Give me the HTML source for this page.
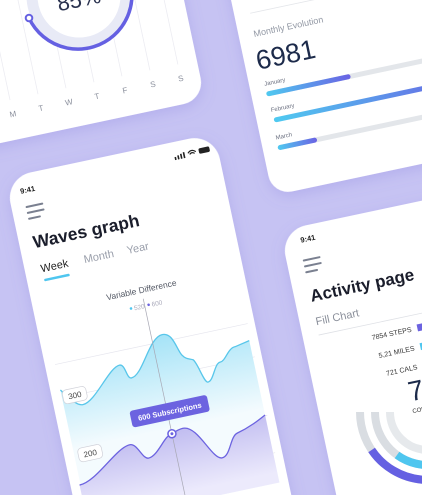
<!DOCTYPE html>
<html><head><meta charset="utf-8"><style>
html,body{margin:0;padding:0;width:422px;height:495px;overflow:hidden;background:#c6c3f3}
svg{display:block;font-family:"Liberation Sans",sans-serif}
</style></head><body>
<svg width="422" height="495" viewBox="0 0 422 495" xmlns="http://www.w3.org/2000/svg">
<defs>
<filter id="sh" x="-20%" y="-20%" width="140%" height="140%"><feDropShadow dx="0" dy="4" stdDeviation="7" flood-color="#7d74d8" flood-opacity="0.25"/></filter>
<linearGradient id="bar" x1="0" y1="0" x2="1" y2="0"><stop offset="0" stop-color="#4fcaf0"/><stop offset="1" stop-color="#6a62e4"/></linearGradient>
<linearGradient id="cy" gradientUnits="userSpaceOnUse" x1="0" y1="360" x2="0" y2="455"><stop offset="0" stop-color="#a4e3f7"/><stop offset="1" stop-color="#f4fbfe"/></linearGradient>
<linearGradient id="pu" gradientUnits="userSpaceOnUse" x1="0" y1="460" x2="0" y2="520"><stop offset="0" stop-color="#c3bff1"/><stop offset="1" stop-color="#eceafc"/></linearGradient>
</defs>
<rect width="422" height="495" fill="#c6c3f3"/>
<g transform="rotate(-12)">
  <!-- top-left card -->
  <rect x="-220" y="-220" width="400" height="360" rx="22" fill="#fff" filter="url(#sh)"/>
  <g stroke="#ececf2" stroke-width="0.8">
    <line x1="-11" y1="-150" x2="-11" y2="100"/><line x1="17.6" y1="-150" x2="17.6" y2="100"/>
    <line x1="46.2" y1="-150" x2="46.2" y2="100"/><line x1="74.8" y1="-150" x2="74.8" y2="100"/>
    <line x1="103.4" y1="-150" x2="103.4" y2="100"/><line x1="132" y1="-150" x2="132" y2="100"/>
    <line x1="160.6" y1="-150" x2="160.6" y2="100"/>
  </g>
  <g font-size="8" fill="#8a8f9c" text-anchor="middle">
    <text x="-11" y="117">M</text><text x="17.6" y="117">T</text><text x="46.2" y="117">W</text>
    <text x="74.8" y="117">T</text><text x="103.4" y="117">F</text><text x="132" y="117">S</text><text x="160.6" y="117">S</text>
  </g>
  <!-- top-right card -->
  <rect x="226" y="-120" width="320" height="368" rx="20" fill="#fff" filter="url(#sh)"/>
  <line x1="242" y1="65" x2="440" y2="65" stroke="#e4e6ea" stroke-width="0.8"/>
  <text x="241" y="89" font-size="9" fill="#9298a4">Monthly Evolution</text>
  <text x="238" y="122" font-size="27" fill="#1c2a4a">6981</text>
  <text x="241" y="139" font-size="6" fill="#6b7080">January</text>
  <rect x="241" y="145" width="200" height="5" rx="2.5" fill="#e3e6ea"/>
  <rect x="241" y="145" width="86" height="5" rx="2.5" fill="url(#bar)"/>
  <text x="242" y="166" font-size="6" fill="#6b7080">February</text>
  <rect x="243" y="172" width="200" height="5" rx="2.5" fill="url(#bar)"/>
  <text x="241" y="194" font-size="6" fill="#6b7080">March</text>
  <rect x="241" y="200" width="200" height="5" rx="2.5" fill="#e3e6ea"/>
  <rect x="241" y="200" width="40" height="5" rx="2.5" fill="url(#bar)"/>
  <!-- left phone -->
  <rect x="-32" y="175" width="214" height="520" rx="26" fill="#fff" filter="url(#sh)"/>
  <text x="-20" y="194" font-size="7.5" font-weight="bold" fill="#222">9:41</text>
  <g fill="#222"><rect x="138" y="190" width="1.6" height="3"/><rect x="141" y="189" width="1.6" height="4"/><rect x="144" y="188" width="1.6" height="5"/><rect x="147" y="187" width="1.6" height="6"/></g>
  <path d="M152,189 Q156,185 160,189 M153.5,190.5 Q156,188 158.5,190.5" stroke="#222" stroke-width="1.2" fill="none"/>
  <rect x="163" y="186.5" width="11" height="5.5" rx="1.5" fill="#222"/>
  <g stroke="#7a8090" stroke-width="2" stroke-linecap="round"><line x1="-17" y1="208" x2="-1" y2="208"/><line x1="-17" y1="214" x2="-1" y2="214"/><line x1="-17" y1="220" x2="-6" y2="220"/></g>
  <text x="-18" y="250" font-size="17.5" font-weight="bold" fill="#1a1d2b">Waves graph</text>
  <text x="-16" y="275" font-size="11" fill="#222">Week</text>
  <text x="28" y="275" font-size="11" fill="#9a9fab">Month</text>
  <text x="72" y="275" font-size="11" fill="#9a9fab">Year</text>
  <rect x="-15" y="282" width="26" height="2.5" rx="1.2" fill="#4fc6ef"/>
  <text x="78" y="316" font-size="8.5" fill="#555a66" text-anchor="middle">Variable Difference</text>
  <circle cx="64" cy="329" r="1.3" fill="#4fc6ef"/><text x="67" y="331.5" font-size="6.5" fill="#aab">520</text>
  <circle cx="82" cy="329" r="1.3" fill="#6c63e0"/><text x="85" y="331.5" font-size="6.5" fill="#aab">600</text>
  <g stroke="#e6e6ee" stroke-width="0.7"><line x1="-22" y1="368" x2="175" y2="368"/><line x1="-22" y1="402" x2="175" y2="402"/><line x1="-22" y1="462" x2="175" y2="462"/><line x1="-22" y1="500" x2="175" y2="500"/></g>
  <path d="M-22,394 C-12,408 -8,413 -3,413 C10,413 30,382 41,382 C47,382 45,397 50,397 C62,397 75,361 89,361 C100,361 100,378 104,385 C107,390 110,390 114,392 C118,396 120,417 124,417 C130,417 134,400 140,400 C146,400 150,388 158,388 L173,385 L173,530 L-22,530 Z" fill="url(#cy)"/>
  <path d="M-22,394 C-12,408 -8,413 -3,413 C10,413 30,382 41,382 C47,382 45,397 50,397 C62,397 75,361 89,361 C100,361 100,378 104,385 C107,390 110,390 114,392 C118,396 120,417 124,417 C130,417 134,400 140,400 C146,400 150,388 158,388 L173,385" fill="none" stroke="#58c6ea" stroke-width="1.3"/>
  <path d="M-23,491 C-5,491 20,462 34.6,462 C42,462 44,479 50,479 C60,479 70,460 78,460 C83,458 86,457 90,457 C105,457 112,494 122,494 C131,494 134,475 142,473 C155,470 165,465 173,461 L173,530 L-23,530 Z" fill="url(#pu)"/>
  <path d="M-23,491 C-5,491 20,462 34.6,462 C42,462 44,479 50,479 C60,479 70,460 78,460 C83,458 86,457 90,457 C105,457 112,494 122,494 C131,494 134,475 142,473 C155,470 165,465 173,461" fill="none" stroke="#6c63e0" stroke-width="1.3"/>
  <line x1="78" y1="322" x2="78" y2="530" stroke="#a8a8b4" stroke-width="0.7"/>
  <rect x="-21" y="395" width="24" height="14" rx="4" fill="#fff" stroke="#cfd0d8" stroke-width="0.7"/>
  <text x="-9" y="405" font-size="8" fill="#444" text-anchor="middle">300</text>
  <rect x="-18" y="455" width="24" height="14" rx="4" fill="#fff" stroke="#cfd0d8" stroke-width="0.7"/>
  <text x="-6" y="465" font-size="8" fill="#444" text-anchor="middle">200</text>
  <rect x="41" y="429" width="79" height="17" rx="3" fill="#6c63e0"/>
  <text x="80.5" y="440.5" font-size="7.5" font-weight="bold" fill="#fff" text-anchor="middle">600 Subscriptions</text>
  <circle cx="78" cy="460" r="4" fill="#fff" stroke="#6c63e0" stroke-width="1.5"/><circle cx="78" cy="460" r="1.5" fill="#6c63e0"/>
  <!-- right phone -->
  <rect x="226" y="284" width="320" height="420" rx="26" fill="#fff" filter="url(#sh)"/>
  <text x="244" y="300" font-size="7.5" font-weight="bold" fill="#222">9:41</text>
  <g stroke="#7a8090" stroke-width="2" stroke-linecap="round"><line x1="243" y1="318" x2="259" y2="318"/><line x1="243" y1="324" x2="259" y2="324"/><line x1="243" y1="330" x2="254" y2="330"/></g>
  <text x="242" y="360" font-size="17" font-weight="bold" fill="#1a1d2b">Activity page</text>
  <text x="242" y="384" font-size="11" fill="#8a8f9a">Fill Chart</text>
  <line x1="242" y1="394" x2="440" y2="394" stroke="#dfe1e6" stroke-width="0.8"/>
  <g font-size="7" fill="#333" text-anchor="end"><text x="334" y="410">7854 STEPS</text><text x="333" y="429">5,21 MILES</text><text x="332" y="448">721  CALS</text></g>
  <rect x="340" y="404" width="7" height="7" fill="#6c63e0"/><rect x="339" y="423" width="7" height="7" fill="#4fc6ef"/><rect x="338" y="442" width="7" height="7" fill="#9adcf2"/>
  <text x="318" y="478" font-size="28" fill="#1c2a4a">71</text>
  <text x="318" y="490" font-size="6" fill="#333">COMPLETED</text>
</g>
<!-- donut (screen coords) -->
<circle cx="79" cy="-4" r="47" fill="#fff" stroke="#e8eaf6" stroke-width="11"/>
<path d="M29,18 A54,54 0 1 0 106,-51" fill="none" stroke="#6560e2" stroke-width="3.5"/>
<circle cx="29" cy="18" r="3.3" fill="#fff" stroke="#6560e2" stroke-width="2"/>
<text x="79" y="7" font-size="22" fill="#2b3350" text-anchor="middle" transform="rotate(-12 79 0)">85%</text>
<!-- activity rings (screen coords) -->
<g fill="none" stroke-width="8">
  <path d="M360,412 A68,68 0 0 0 496,412" stroke="#d9dde2"/>
  <path d="M375,412 A53,53 0 0 0 481,412" stroke="#d9dde2"/>
  <path d="M390,412 A38,38 0 0 0 466,412" stroke="#e6e9ec"/>
  <path d="M371.6,450 A68,68 0 0 0 480,455.7" stroke="#6560e2"/>
  <path d="M397,455 A53,53 0 0 0 474,438.5" stroke="#4fc6ef"/>
</g>
</svg>
</body></html>
